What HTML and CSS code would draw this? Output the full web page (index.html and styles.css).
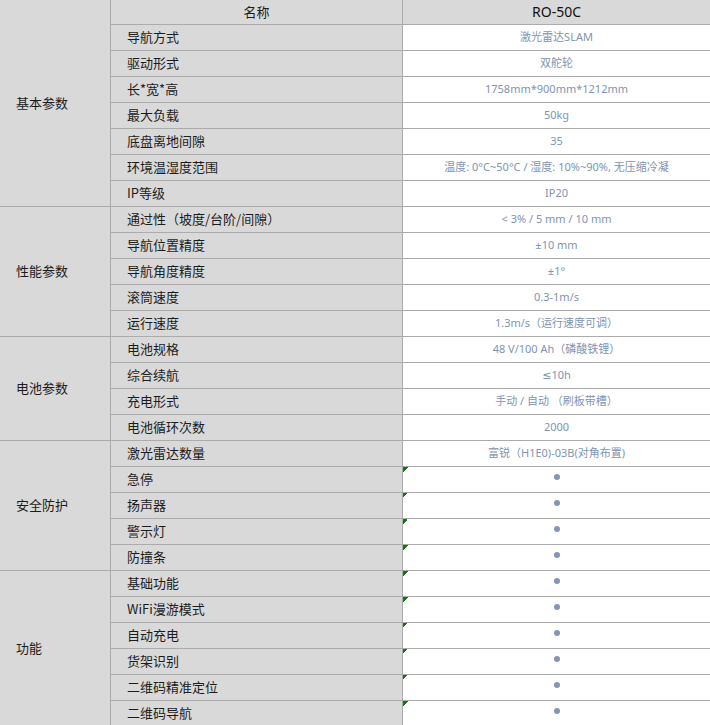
FILE: index.html
```html
<!DOCTYPE html>
<html lang="zh-CN">
<head>
<meta charset="utf-8">
<title>RO-50C 参数</title>
<link rel="stylesheet" href="styles.css">
</head>
<body>
<table class="spec">
  <colgroup>
    <col class="c-group">
    <col class="c-name">
    <col class="c-val">
  </colgroup>
  <tbody>
    <tr class="head">
      <td class="group" rowspan="8">基本参数</td>
      <td class="hname">名称</td>
      <td class="hval">RO-50C</td>
    </tr>
    <tr><td class="name">导航方式</td><td class="val">激光雷达SLAM</td></tr>
    <tr><td class="name">驱动形式</td><td class="val">双舵轮</td></tr>
    <tr><td class="name">长*宽*高</td><td class="val">1758mm*900mm*1212mm</td></tr>
    <tr><td class="name">最大负载</td><td class="val">50kg</td></tr>
    <tr><td class="name">底盘离地间隙</td><td class="val">35</td></tr>
    <tr><td class="name">环境温湿度范围</td><td class="val">温度: 0°C~50°C / 湿度: 10%~90%, 无压缩冷凝</td></tr>
    <tr><td class="name">IP等级</td><td class="val">IP20</td></tr>

    <tr><td class="group" rowspan="5">性能参数</td><td class="name">通过性（坡度/台阶/间隙）</td><td class="val">&lt; 3% / 5 mm / 10 mm</td></tr>
    <tr><td class="name">导航位置精度</td><td class="val">±10 mm</td></tr>
    <tr><td class="name">导航角度精度</td><td class="val">±1°</td></tr>
    <tr><td class="name">滚筒速度</td><td class="val">0.3-1m/s</td></tr>
    <tr><td class="name">运行速度</td><td class="val">1.3m/s（运行速度可调）</td></tr>

    <tr><td class="group" rowspan="4">电池参数</td><td class="name">电池规格</td><td class="val">48 V/100 Ah（磷酸铁锂）</td></tr>
    <tr><td class="name">综合续航</td><td class="val">≤10h</td></tr>
    <tr><td class="name">充电形式</td><td class="val">手动 / 自动 （刷板带槽）</td></tr>
    <tr><td class="name">电池循环次数</td><td class="val">2000</td></tr>

    <tr><td class="group" rowspan="5">安全防护</td><td class="name">激光雷达数量</td><td class="val">富锐（H1E0)-03B(对角布置)</td></tr>
    <tr><td class="name">急停</td><td class="val dotcell"><span class="dot"></span></td></tr>
    <tr><td class="name">扬声器</td><td class="val dotcell"><span class="dot"></span></td></tr>
    <tr><td class="name">警示灯</td><td class="val dotcell"><span class="dot"></span></td></tr>
    <tr><td class="name">防撞条</td><td class="val dotcell"><span class="dot"></span></td></tr>

    <tr><td class="group" rowspan="6">功能</td><td class="name">基础功能</td><td class="val dotcell"><span class="dot"></span></td></tr>
    <tr><td class="name">WiFi漫游模式</td><td class="val dotcell"><span class="dot"></span></td></tr>
    <tr><td class="name">自动充电</td><td class="val dotcell"><span class="dot"></span></td></tr>
    <tr><td class="name">货架识别</td><td class="val dotcell"><span class="dot"></span></td></tr>
    <tr><td class="name">二维码精准定位</td><td class="val dotcell"><span class="dot"></span></td></tr>
    <tr><td class="name">二维码导航</td><td class="val dotcell"><span class="dot"></span></td></tr>
  </tbody>
</table>
</body>
</html>
```

FILE: styles.css
```css
html, body {
  margin: 0;
  padding: 0;
  background: #ffffff;
}

.spec {
  border-collapse: separate;
  border-spacing: 0;
  table-layout: fixed;
  width: 710px;
  font-family: "Noto Sans CJK SC", "Noto Sans", sans-serif;
  color: #1c1c1c;
}

.c-group { width: 111px; }
.c-name { width: 292px; }
.c-val { width: 307px; }

.spec td {
  padding: 0 0 1px 0;
  height: 24px;
  border-bottom: 1px solid #ababab;
  white-space: nowrap;
  overflow: hidden;
  line-height: 24px;
}

.spec .head td {
  height: 23px;
  line-height: 23px;
}

.group {
  background: #d9d9d9;
  border-right: 1px solid #ababab;
  font-size: 13px;
  padding-left: 16px !important;
  vertical-align: middle;
}

.name {
  background: #d9d9d9;
  border-right: 1px solid #ababab;
  font-size: 13px;
  padding-left: 16px !important;
}

.hname {
  background: #d9d9d9;
  border-right: 1px solid #ababab;
  font-size: 13px;
  text-align: center;
}

.hval {
  background: #d9d9d9;
  font-family: "Noto Sans", "Noto Sans CJK SC", sans-serif;
  font-size: 14px;
  text-align: center;
  color: #111;
}

.val {
  background: #ffffff;
  font-family: "Noto Sans", "DejaVu Sans", "Noto Sans CJK SC", sans-serif;
  font-size: 11px;
  color: #8194b2;
  text-align: center;
}

.dotcell {
  vertical-align: top;
  background: linear-gradient(to bottom right, #0b7a0b 50%, transparent 50%) no-repeat 0 0 / 5px 5px, #ffffff;
}

.dot {
  display: inline-block;
  width: 6px;
  height: 6px;
  border-radius: 50%;
  background: #8496b3;
  vertical-align: top;
  margin-top: 7px;
}
```
